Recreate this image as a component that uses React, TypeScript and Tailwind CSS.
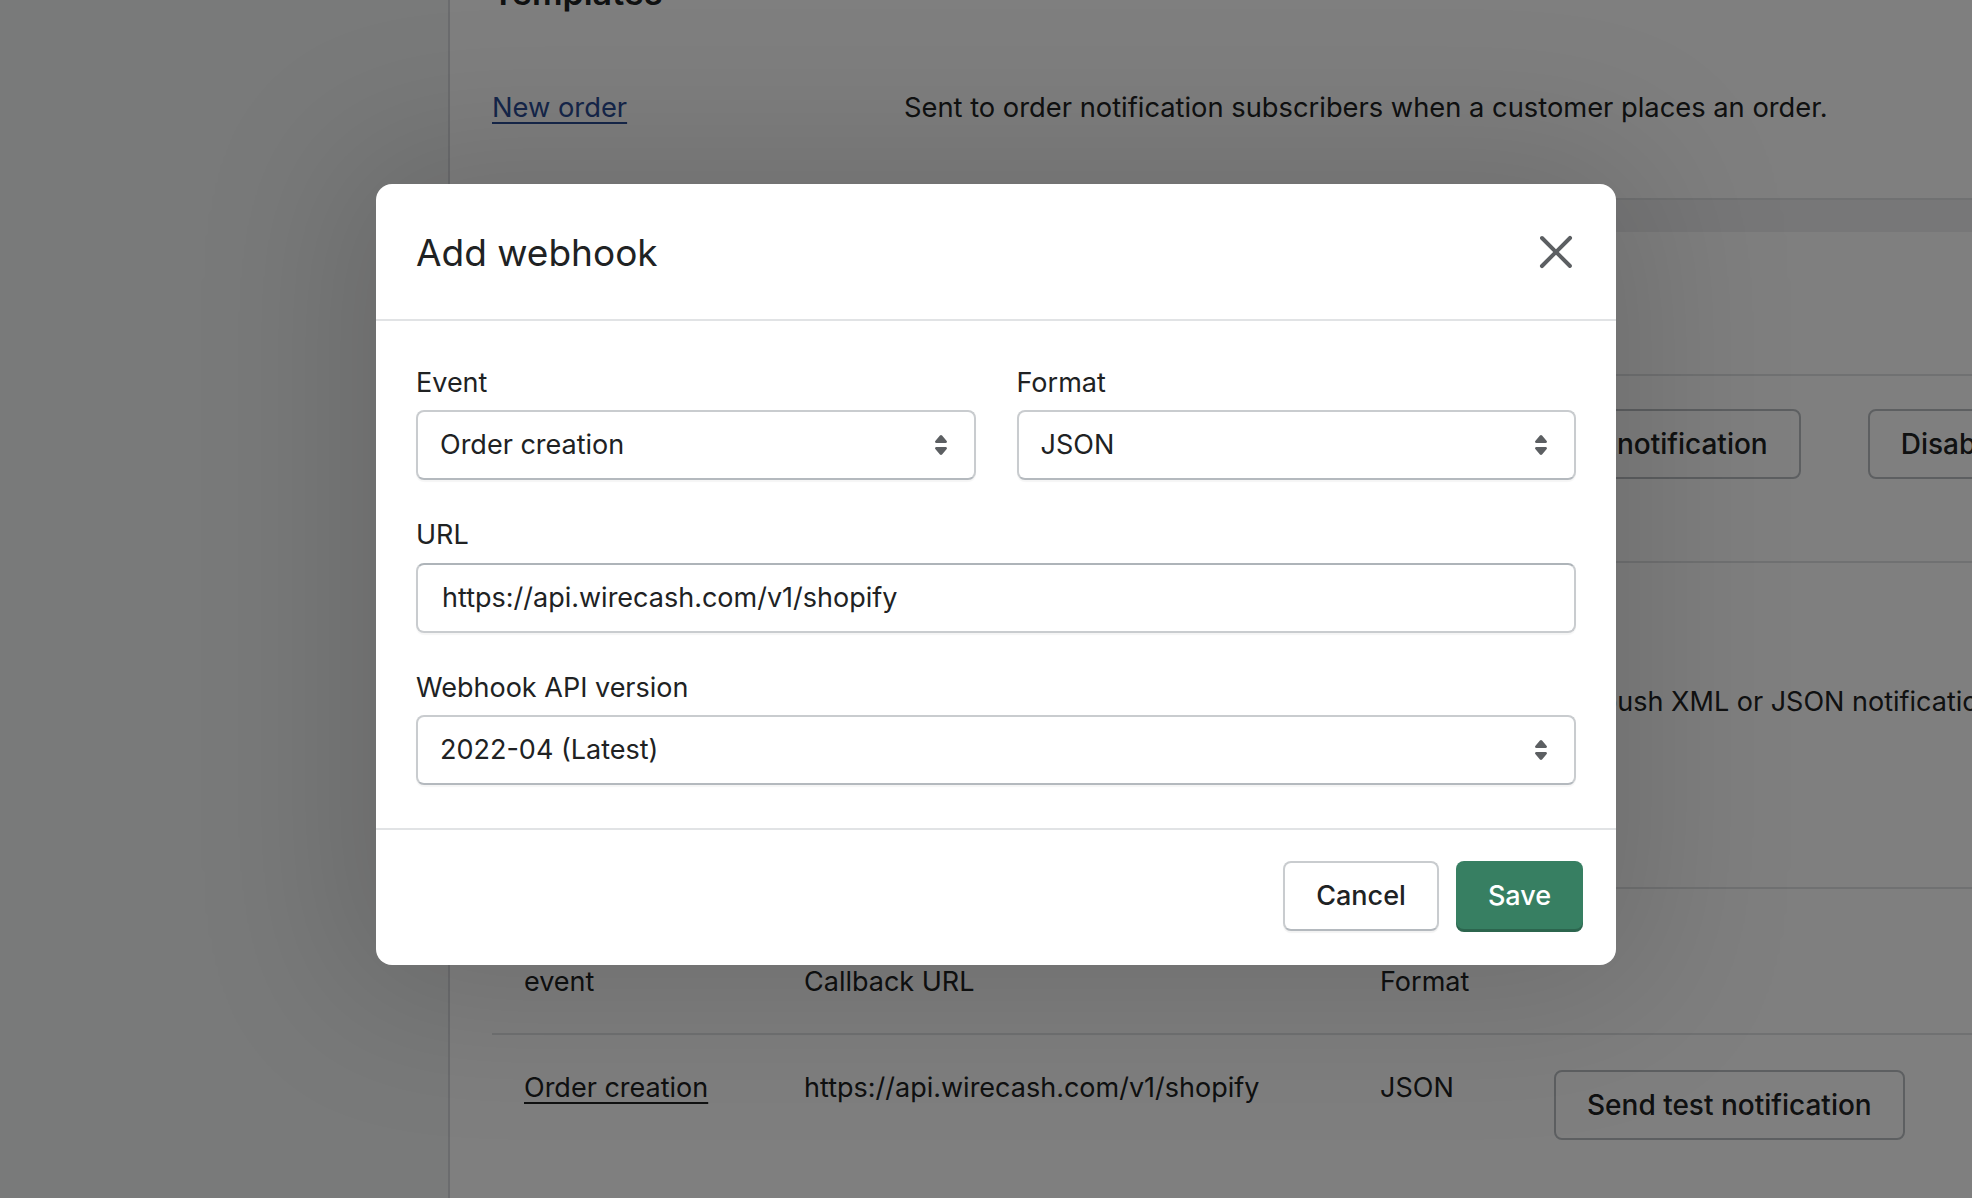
import type { ReactNode } from 'react';

function SelectIcon() {
  return (
    <svg width={40} height={40} viewBox="0 0 20 20" className="shrink-0 fill-[#5c5f62]">
      <path d="M7.676 9h4.648c.563 0 .879-.603.53-1.014l-2.323-2.746a.708.708 0 0 0-1.062 0l-2.324 2.746c-.347.411-.032 1.014.531 1.014Zm4.648 2h-4.648c-.563 0-.878.603-.53 1.014l2.323 2.746c.27.32.792.32 1.062 0l2.323-2.746c.349-.411.033-1.014-.53-1.014Z" />
    </svg>
  );
}

function CloseIcon() {
  return (
    <svg width={40} height={40} viewBox="0 0 20 20" className="fill-[#5c5f62]">
      <path d="m11.414 10 6.293-6.293a1 1 0 1 0-1.414-1.414l-6.293 6.293-6.293-6.293a1 1 0 0 0-1.414 1.414l6.293 6.293-6.293 6.293a1 1 0 1 0 1.414 1.414l6.293-6.293 6.293 6.293a.998.998 0 0 0 1.707-.707.999.999 0 0 0-.293-.707l-6.293-6.293z" />
    </svg>
  );
}

function Field({ label, children }: { label: string; children: ReactNode }) {
  return (
    <div className="flex flex-col">
      <label className="mb-[7px] text-[27px] leading-[40px] text-[#202223]">{label}</label>
      {children}
    </div>
  );
}

function Select({ value }: { value: string }) {
  return (
    <div className="flex h-[70px] items-center justify-between rounded-[8px] border-2 border-[#c9cccf] border-b-[#b4b9be] bg-white pl-[22px] pr-[13px] shadow-[0_2px_1px_rgba(0,0,0,0.04)]">
      <span className="text-[27px] text-[#202223]">{value}</span>
      <SelectIcon />
    </div>
  );
}

function BgButton({ children }: { children: ReactNode }) {
  return (
    <div className="flex h-[70px] shrink-0 items-center rounded-[8px] border-2 border-[#babfc3] bg-white px-[31px] text-[28px] font-medium text-[#202223]">
      {children}
    </div>
  );
}

export default function App() {
  return (
    <div className="relative h-[1198px] w-[1972px] overflow-hidden font-['Inter',sans-serif] text-[#202223]">
      {/* page behind the dialog */}
      <div className="flex h-full">
        <aside className="w-[450px] shrink-0 border-r-2 border-[#d6d9dc] bg-[#f3f4f5]" />
        <main className="flex flex-1 flex-col whitespace-nowrap">
          <section className="h-[200px] border-b-2 border-[#e1e3e5] bg-white pl-[42px]">
            <h2 className="-mt-[27px] text-[34px] font-semibold leading-[40px]">Templates</h2>
            <div className="mt-[75px] flex text-[27.3px] leading-[40px]">
              <a className="w-[412px] text-[#2b4c94] underline underline-offset-[5px]">New order</a>
              <span>Sent to order notification subscribers when a customer places an order.</span>
            </div>
          </section>
          <div className="h-[32px] bg-[#efeff0]" />
          <section className="flex-1 bg-white">
            <div className="h-[144px] border-b-2 border-[#e1e3e5]" />
            <div className="flex h-[187px] gap-[67px] border-b-2 border-[#e1e3e5] pl-[1000px] pt-[33px]">
              <BgButton>Send test notification</BgButton>
              <BgButton>Disable</BgButton>
            </div>
            <div className="h-[326px] border-b-2 border-[#e1e3e5] pl-[6px] pt-[119px] text-[27px] leading-[40px]">
              You can subscribe to events for your products and orders by creating web hooks that will push XML or JSON notifications to a given URL.
            </div>
            <div className="ml-[42px] text-[27px] leading-[40px]">
              <div className="flex h-[146px] border-b-2 border-[#e1e3e5] pt-[73px]">
                <div className="w-[280px] pl-[32px]">event</div>
                <div className="w-[576px] pl-[32px]">Callback URL</div>
                <div className="w-[174px] pl-[32px]">Format</div>
              </div>
              <div className="flex pt-[33px]">
                <div className="w-[280px] pl-[32px]">
                  <a className="underline underline-offset-[5px]">Order creation</a>
                </div>
                <div className="w-[576px] pl-[32px]">https://api.wirecash.com/v1/shopify</div>
                <div className="w-[174px] pl-[32px]">JSON</div>
                <div className="mt-[2px] pl-[32px]">
                  <BgButton>Send test notification</BgButton>
                </div>
              </div>
            </div>
          </section>
        </main>
      </div>

      {/* backdrop */}
      <div className="absolute inset-0 bg-black/50" />

      {/* dialog */}
      <div className="absolute left-[376px] top-[184px] w-[1240px] rounded-[16px] bg-white shadow-[0_0_160px_30px_rgba(0,0,0,0.14)]">
        <div className="flex h-[137px] items-center justify-between border-b-2 border-[#e1e3e5] pl-10 pr-10">
          <h1 className="pt-[2px] text-[37px] font-normal leading-[44px] text-[#202223]">Add webhook</h1>
          <button className="flex items-center justify-center">
            <CloseIcon />
          </button>
        </div>

        <div className="flex flex-col gap-[35px] px-10 pb-[43px] pt-[42px]">
          <div className="grid grid-cols-2 gap-[41px]">
            <Field label="Event">
              <Select value="Order creation" />
            </Field>
            <Field label="Format">
              <Select value="JSON" />
            </Field>
          </div>
          <div className="flex flex-col">
            <label className="mb-[8px] text-[27px] leading-[40px] text-[#202223]">URL</label>
            <div className="flex h-[70px] items-center rounded-[8px] border-2 border-[#c9cccf] border-t-[#aeb4b9] bg-white pl-6 shadow-[0_2px_1px_rgba(0,0,0,0.04)]">
              <span className="text-[27px] text-[#202223]">https://api.wirecash.com/v1/shopify</span>
            </div>
          </div>
          <Field label="Webhook API version">
            <Select value="2022-04 (Latest)" />
          </Field>
        </div>

        <div className="flex h-[137px] items-start justify-end gap-[17px] border-t-2 border-[#e1e3e5] pr-[33px] pt-[31px]">
          <button className="h-[70px] w-[156px] rounded-[8px] border-2 border-[#c9cccf] border-b-[#b4b9be] bg-white text-[27px] font-medium text-[#202223] shadow-[0_2px_1px_rgba(0,0,0,0.05)]">
            Cancel
          </button>
          <button className="h-[71px] w-[127px] rounded-[8px] bg-[#377f62] text-[27px] font-medium text-white shadow-[inset_0_-3px_0_rgba(0,0,0,0.2)]">
            Save
          </button>
        </div>
      </div>
    </div>
  );
}
